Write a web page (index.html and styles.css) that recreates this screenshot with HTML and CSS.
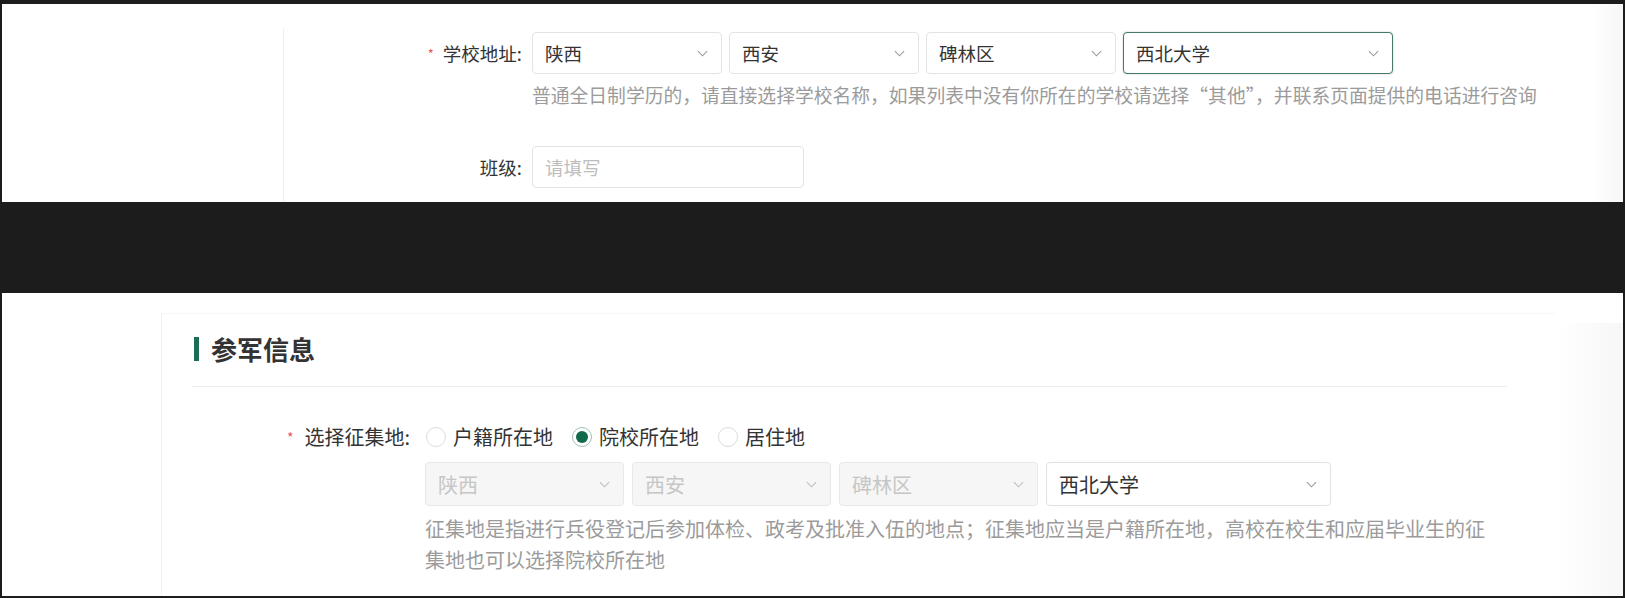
FILE: index.html
```html
<!DOCTYPE html>
<html lang="zh-CN">
<head>
<meta charset="utf-8">
<title>表单</title>
<link rel="stylesheet" href="styles.css">
</head>
<body>
<div class="frame">
  <section class="panel panel-top">
    <div class="aside"></div>
    <div class="form">
      <div class="row">
        <div class="label"><span class="req">*</span>学校地址:</div>
        <div class="control">
          <div class="selects">
            <div class="select w190"><span>陕西</span><svg class="chev" viewBox="0 0 12 7"><polyline points="1,1 6,6 11,1"/></svg></div>
            <div class="select w190"><span>西安</span><svg class="chev" viewBox="0 0 12 7"><polyline points="1,1 6,6 11,1"/></svg></div>
            <div class="select w190"><span>碑林区</span><svg class="chev" viewBox="0 0 12 7"><polyline points="1,1 6,6 11,1"/></svg></div>
            <div class="select w270 focus"><span>西北大学</span><svg class="chev" viewBox="0 0 12 7"><polyline points="1,1 6,6 11,1"/></svg></div>
          </div>
          <p class="help">普通全日制学历的，请直接选择学校名称，如果列表中没有你所在的学校请选择“其他”，并联系页面提供的电话进行咨询</p>
        </div>
      </div>
      <div class="row row-class">
        <div class="label">班级:</div>
        <div class="control">
          <div class="input"><span class="placeholder">请填写</span></div>
        </div>
      </div>
    </div>
    <div class="edge"></div>
  </section>

  <div class="band"></div>

  <section class="panel panel-bottom">
    <div class="card">
      <div class="card-head">
        <span class="bar"></span>
        <h2 class="title">参军信息</h2>
      </div>
      <div class="row2">
        <div class="label2"><span class="req">*</span>选择征集地:</div>
        <div class="control2">
          <div class="radios">
            <label class="radio"><span class="dot"></span>户籍所在地</label>
            <label class="radio checked"><span class="dot"></span>院校所在地</label>
            <label class="radio"><span class="dot"></span>居住地</label>
          </div>
          <div class="selects2">
            <div class="select2 w199 disabled"><span>陕西</span><svg class="chev" viewBox="0 0 12 7"><polyline points="1,1 6,6 11,1"/></svg></div>
            <div class="select2 w199 disabled"><span>西安</span><svg class="chev" viewBox="0 0 12 7"><polyline points="1,1 6,6 11,1"/></svg></div>
            <div class="select2 w199 disabled"><span>碑林区</span><svg class="chev" viewBox="0 0 12 7"><polyline points="1,1 6,6 11,1"/></svg></div>
            <div class="select2 w285"><span>西北大学</span><svg class="chev" viewBox="0 0 12 7"><polyline points="1,1 6,6 11,1"/></svg></div>
          </div>
          <p class="help2">征集地是指进行兵役登记后参加体检、政考及批准入伍的地点；征集地应当是户籍所在地，高校在校生和应届毕业生的征集地也可以选择院校所在地</p>
        </div>
      </div>
    </div>
    <div class="edge2"></div>
  </section>
</div>
</body>
</html>
```

FILE: styles.css
```css
* { box-sizing: border-box; }
html, body { margin: 0; padding: 0; }
body {
  background: #1c1c1c;
  font-family: "Noto Sans CJK SC", "Microsoft YaHei", sans-serif;
  color: #333;
}
.frame {
  width: 1625px;
  height: 598px;
  overflow: hidden;
}
.panel {
  background: #fff;
  margin: 0 2px;
  display: flex;
  position: relative;
}
.panel-top {
  margin-top: 4px;
  height: 198px;
  font-size: 18.5px;
}
.aside {
  width: 282px;
  flex: none;
  margin-top: 24px;
  border-right: 1px solid #efefef;
}
.form {
  padding-top: 28px;
  flex: 1;
}
.row {
  display: flex;
  align-items: flex-start;
}
.row-class { margin-top: 38px; }
.label {
  width: 238px;
  text-align: right;
  line-height: 42px;
  height: 42px;
  margin-right: 10px;
  color: #333;
  white-space: nowrap;
}
.req {
  color: #e55a5a;
  font-size: 13px;
  margin-right: 9px;
  vertical-align: 2px;
}
.selects { display: flex; gap: 7px; }
.select, .select2, .input {
  height: 42px;
  border: 1px solid #e3e3e3;
  border-radius: 4px;
  background: #fff;
  display: flex;
  align-items: center;
  justify-content: space-between;
  padding: 0 13px 0 12px;
  color: #333;
}
.w190 { width: 190px; }
.w270 { width: 270px; }
.select.focus { border: 1.5px solid #46796b; box-shadow: 0 0 2px rgba(60,110,95,0.35); }
.chev {
  width: 11px;
  height: 7px;
  fill: none;
  stroke: #9a9a9a;
  stroke-width: 1.2;
}
.help {
  margin: 8px 0 0;
  line-height: 26px;
  font-size: 18.8px;
  color: #9b9b9b;
  white-space: nowrap;
}
.input { width: 272px; }
.placeholder { color: #bdbdbd; }
.edge {
  position: absolute;
  right: 0;
  top: 0;
  width: 32px;
  height: 100%;
  background: linear-gradient(to right, #fff, #f6f6f6);
}
.band { height: 91px; }
.panel-bottom {
  height: 303px;
  padding: 20px 0 0 159px;
  font-size: 20px;
}
.card {
  width: 1394px;
  border-left: 1px solid #f0f0f0;
  border-top: 1px solid #f6f6f6;
}
.card-head {
  display: flex;
  align-items: center;
  margin: 0 48px 0 30px;
  padding: 23px 0 25px 2px;
  border-bottom: 1px solid #ececec;
}
.bar {
  width: 5px;
  height: 24px;
  background: #1b6e55;
  margin-right: 12px;
}
.title {
  margin: 0;
  font-size: 26px;
  line-height: 24px;
  font-weight: 700;
  color: #333;
}
.row2 {
  display: flex;
  align-items: flex-start;
  margin-top: 35px;
}
.label2 {
  width: 248px;
  text-align: right;
  margin-right: 15px;
  line-height: 30px;
  white-space: nowrap;
}
.label2 .req { font-size: 14px; margin-right: 11px; }
.radios {
  display: flex;
  align-items: center;
  height: 30px;
  gap: 18px;
}
.radio {
  display: flex;
  align-items: center;
  gap: 7px;
  color: #333;
  line-height: 30px;
}
.dot {
  width: 20px;
  height: 20px;
  border-radius: 50%;
  border: 1px solid #dcdcdc;
  background: #fff;
  margin-left: 1px;
  position: relative;
}
.radio.checked .dot {
  border: 1.5px solid #9fc2b5;
}
.radio.checked .dot::after {
  content: "";
  position: absolute;
  left: 2.5px;
  top: 2.5px;
  width: 12px;
  height: 12px;
  border-radius: 50%;
  background: #0f6a4c;
}
.selects2 { display: flex; gap: 8px; margin-top: 10px; }
.select2 { height: 44px; border-color: #e2e2e2; }
.w199 { width: 199px; }
.w285 { width: 285px; }
.select2.disabled { background: #f6f6f6; color: #c6c6c6; border-color: #e8e8e8; }
.select2.disabled .chev { stroke: #bdbdbd; }
.help2 {
  margin: 7px 0 0;
  width: 1075px;
  line-height: 31px;
  color: #9b9b9b;
}
.edge2 {
  position: absolute;
  right: 0;
  top: 30px;
  width: 66px;
  height: calc(100% - 30px);
  background: linear-gradient(to right, #fff, #f7f7f7);
}
```
